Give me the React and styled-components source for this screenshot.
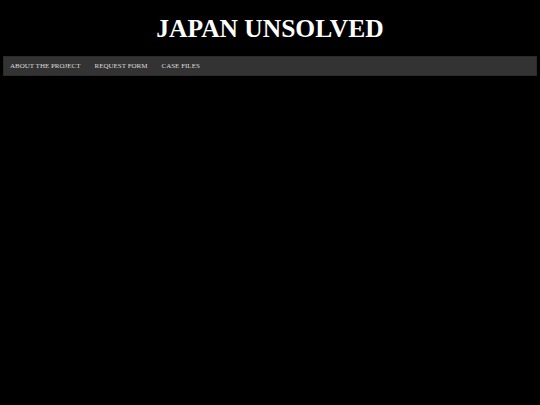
import React from 'react'
import styled, { createGlobalStyle } from 'styled-components'

const GlobalStyle = createGlobalStyle`
  html, body {
    margin: 0;
    padding: 0;
    background: #000;
    height: 100%;
  }
  body {
    font-family: "Liberation Serif", "Times New Roman", serif;
    color: #fff;
  }
`

const Page = styled.div`
  padding: 0 3px;
`

const Title = styled.h1`
  margin: 0;
  padding: 14px 0 13px;
  text-align: center;
  font-size: 25.5px;
  font-weight: 700;
  line-height: 29px;
  color: #fff;
`

const Nav = styled.nav`
  display: flex;
  align-items: center;
  height: 18px;
  background: #333;
  border: 1px solid #2b2b2b;
  padding: 0 6px;
`

const NavLink = styled.a`
  font-size: 7px;
  color: #ddd;
  text-decoration: none;
  padding: 0 7px 0 0;
  & + & {
    padding-left: 7px;
  }
`

export default function App() {
  return (
    <>
      <GlobalStyle />
      <Page>
        <Title>JAPAN UNSOLVED</Title>
        <Nav>
          <NavLink href="#">ABOUT THE PROJECT</NavLink>
          <NavLink href="#">REQUEST FORM</NavLink>
          <NavLink href="#">CASE FILES</NavLink>
        </Nav>
      </Page>
    </>
  )
}
